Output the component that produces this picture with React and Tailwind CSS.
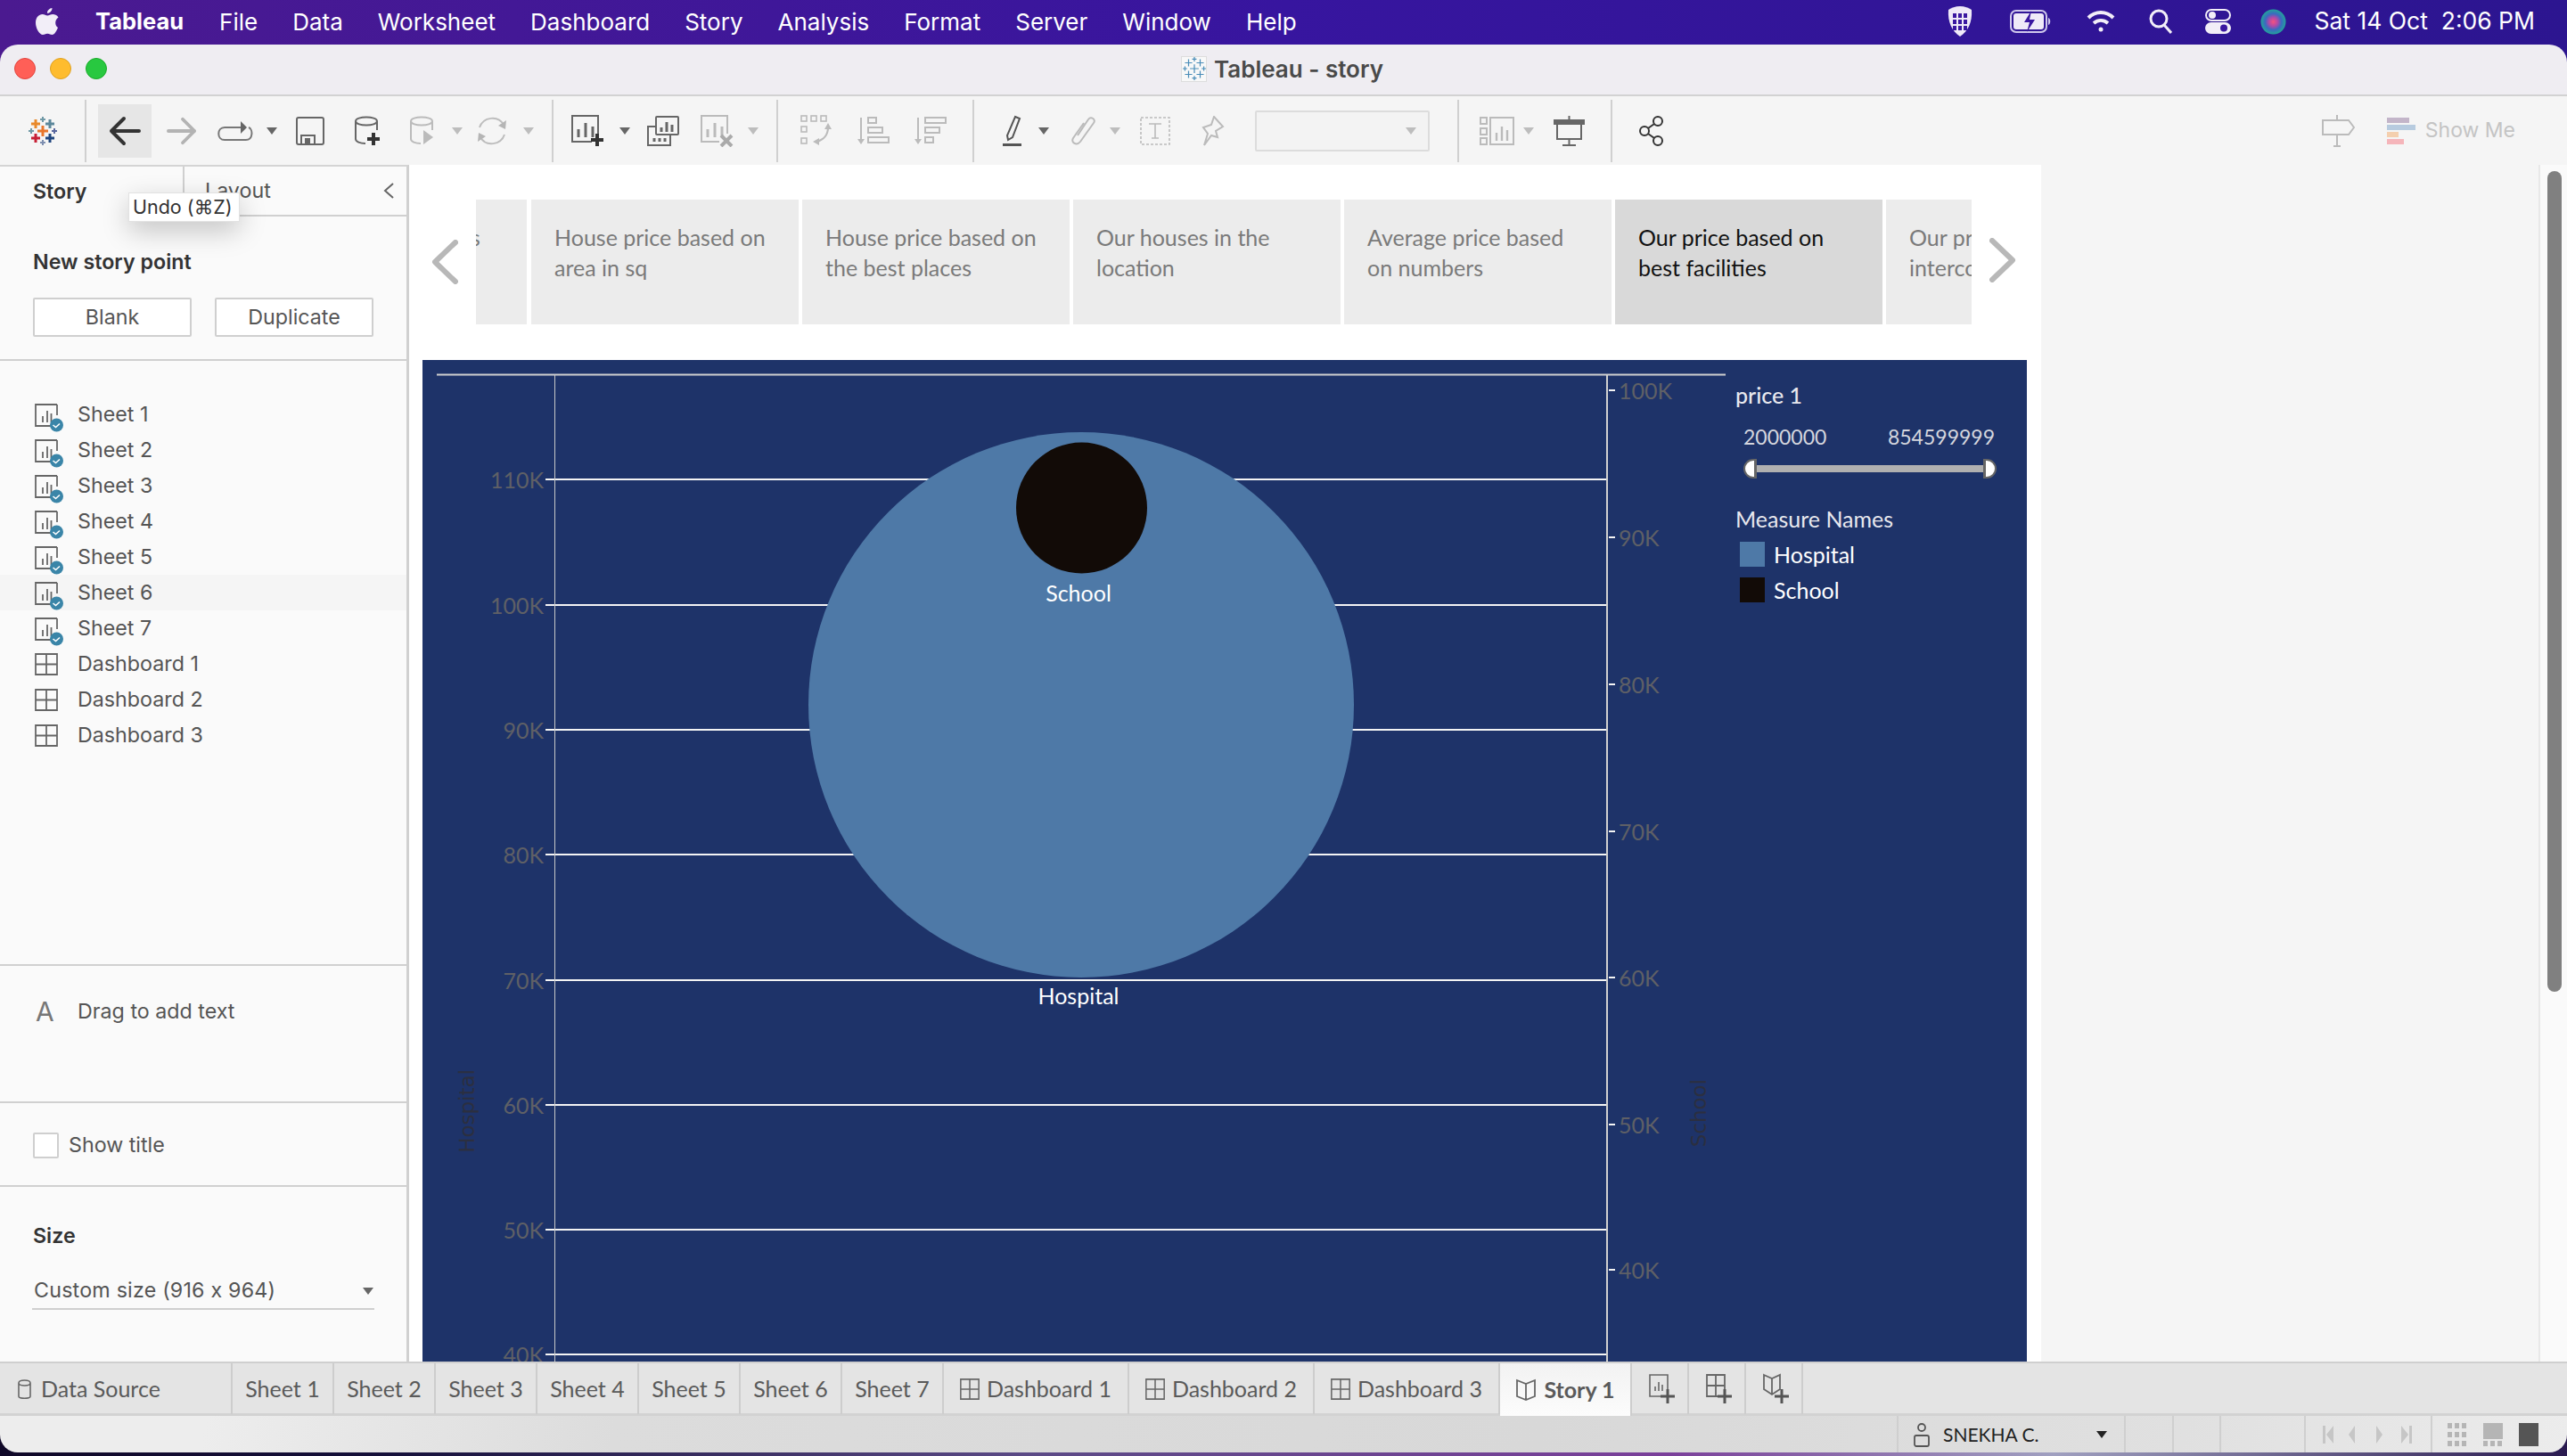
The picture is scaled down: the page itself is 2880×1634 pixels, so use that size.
import React from "react";

const menuItems = ["File", "Data", "Worksheet", "Dashboard", "Story", "Analysis", "Format", "Server", "Window", "Help"];
const storyTabs = [
  ["House price based on", "area in sq"],
  ["House price based on", "the best places"],
  ["Our houses in the", "location"],
  ["Average price based", "on numbers"],
];
const leftTicks = [["110K", 538], ["100K", 679], ["90K", 819], ["80K", 959], ["70K", 1100], ["60K", 1240], ["50K", 1380], ["40K", 1520]];
const rightTicks = [["100K", 438], ["90K", 603], ["80K", 768], ["70K", 933], ["60K", 1097], ["50K", 1262], ["40K", 1425]];
const sheets = ["Sheet 1", "Sheet 2", "Sheet 3", "Sheet 4", "Sheet 5", "Sheet 6", "Sheet 7"];
const dashboards = ["Dashboard 1", "Dashboard 2", "Dashboard 3"];

const Caret = ({ light, className = "" }) => (
  <svg width="12" height="8" viewBox="0 0 12 8" className={`shrink-0 ${className}`}>
    <path d="M0 0h12L6 8z" fill={light ? "#bdbdbd" : "#666"} />
  </svg>
);

const Divider = ({ className }) => <div className={`w-[2px] h-[70px] bg-[#d0d0d0] shrink-0 ${className}`} />;

const TableauLogo = ({ size = 32, thin }) => (
  <svg width={size} height={size} viewBox="0 0 32 32" className="shrink-0">
    {[
      [16, 16, 12, "#e8762c", 3],
      [8, 8, 10, "#e8892b", 3],
      [24, 8, 10, "#5b879b", 3],
      [8, 24, 10, "#c72035", 3],
      [24, 24, 10, "#1f457e", 3],
      [16, 3, 6, "#7099a6", 2],
      [16, 29, 6, "#7e8fb0", 2],
      [3, 16, 6, "#7099a6", 2],
      [29, 16, 6, "#59679f", 2],
    ].map(([x, y, s, c, t], i) => (
      <path key={i} d={`M${x - s / 2} ${y}h${s}M${x} ${y - s / 2}v${s}`} stroke={thin ? "#4a8db8" : c} strokeWidth={thin ? 1.5 : t} />
    ))}
  </svg>
);

const Plus = ({ x, y, s = 14, color = "#333", w = 4 }) => (
  <path d={`M${x - s / 2} ${y}h${s}M${x} ${y - s / 2}v${s}`} stroke={color} strokeWidth={w} fill="none" />
);

const Cylinder = ({ color }) => (
  <path d="M1 6c0-6 24-6 24 0s-24 6-24 0v20c0 3 5 5 11 5M25 6v10" fill="none" stroke={color} strokeWidth="2" />
);

const Bars = ({ x, y, color }) => (
  <path d={`M${x} ${y}v-9M${x + 8} ${y}v-16M${x + 16} ${y}v-12`} fill="none" stroke={color} strokeWidth="3" />
);

const SheetIcon = () => (
  <svg width="34" height="34" viewBox="0 0 34 34" className="shrink-0">
    <path d="M25 1H1v24h17" fill="none" stroke="#666" strokeWidth="1.8" />
    <path d="M25 1v12" fill="none" stroke="#666" strokeWidth="1.8" />
    <path d="M9 21v-7M14 21v-13M18.5 21v-10" stroke="#666" strokeWidth="1.8" />
    <circle cx="24.5" cy="24" r="7.5" fill="#3a85a8" />
    <path d="M20.5 24l3 2.5 4.5-4" fill="none" stroke="#fff" strokeWidth="1.6" />
  </svg>
);

const GridIcon = ({ w = 26, h = 25 }) => (
  <svg width={w} height={h} viewBox="0 0 26 25" preserveAspectRatio="none" className="shrink-0">
    <path d="M1 1h24v23H1zM13 1v23M1 12.5h24" fill="none" stroke="#666" strokeWidth="1.8" />
  </svg>
);

const BookIcon = () => (
  <svg width="24" height="26" viewBox="0 0 24 26" className="shrink-0">
    <path d="M2 2l10 4 10-4v18l-10 4-10-4zM12 6v18" fill="none" stroke="#666" strokeWidth="1.8" />
  </svg>
);

const StoryTab = ({ lines, active }) => (
  <div className={`w-[300px] h-[140px] shrink-0 pl-[26px] pt-[25px] text-[25px] leading-[34px] font-['Lato',sans-serif] whitespace-nowrap overflow-hidden ${active ? "bg-[#d9d9d9] text-[#111]" : "bg-[#ececec] text-[#7a7a7a]"}`}>
    <div>{lines[0]}</div>
    <div>{lines[1]}</div>
  </div>
);

const SheetTab = ({ label, width }) => (
  <div className={`${width} h-[57px] flex items-center justify-center border-r-2 border-[#cdcdcd] shrink-0`}>{label}</div>
);

function Chart() {
  return (
    <div className="relative ml-[15px] mt-[40px] w-[1800px] flex-1 bg-[#1e3369] overflow-hidden font-['Lato',sans-serif]">
      <svg width="1800" height="1124" viewBox="474 404 1800 1124" className="absolute left-0 top-0">
        <path d="M490 420.5H1936" stroke="#cfcfcf" strokeWidth="2" />
        {leftTicks.map(([t, y]) => (
          <path key={t} d={`M612 ${y}H1803`} stroke="#f4f4f4" strokeWidth="2" />
        ))}
        <path d="M622.5 420V1528" stroke="#c8c8c8" strokeWidth="1" />
        <path d="M1803 420V1528" stroke="#d0d0d0" strokeWidth="2" />
        {rightTicks.map(([t, y]) => (
          <path key={t} d={`M1805 ${y}h7`} stroke="#f4f4f4" strokeWidth="2" />
        ))}
        <circle cx="1213" cy="791" r="306" fill="#4e79a7" />
        <circle cx="1213.5" cy="570" r="73.5" fill="#120b07" />
      </svg>
      {leftTicks.map(([t, y]) => (
        <span key={t} className="absolute left-[34px] w-[102px] text-right text-[25px] leading-[30px] text-[#5f6066]" style={{ top: y - 404 - 15 }}>{t}</span>
      ))}
      {rightTicks.map(([t, y]) => (
        <span key={t} className="absolute left-[1342px] text-[25px] leading-[30px] text-[#5f6066]" style={{ top: y - 404 - 15 }}>{t}</span>
      ))}
      <span className="absolute left-[38px] top-[796px] [writing-mode:vertical-rl] rotate-180 text-[23px] leading-[24px] font-['DejaVu_Sans',sans-serif] text-[#2b2f40]">Hospital</span>
      <span className="absolute left-[1420px] top-[807px] [writing-mode:vertical-rl] rotate-180 text-[23px] leading-[24px] font-['DejaVu_Sans',sans-serif] text-[#2b2f40]">School</span>
      <span className="absolute left-[698px] top-[246px] w-[76px] text-center text-[25px] leading-[30px] text-white">School</span>
      <span className="absolute left-[686px] top-[698px] w-[100px] text-center text-[25px] leading-[30px] text-white">Hospital</span>

      <div className="absolute left-[1473px] top-[24px] w-[300px] text-[#e8e8ee] text-[25px] leading-[30px]">
        <div className="font-medium">price 1</div>
        <div className="flex justify-between ml-[9px] mr-[9px] mt-[17px] text-[23px] text-[#d4d6de]">
          <span>2000000</span>
          <span>854599999</span>
        </div>
        <div className="flex items-center ml-[9px] mr-[7px] mt-[10px] h-[22px]">
          <div className="w-[15px] h-[22px] bg-white border-2 border-r-[3px] border-[#666] rounded-l-full" />
          <div className="flex-1 h-[8px] bg-[#b0b0b0]" />
          <div className="w-[15px] h-[22px] bg-white border-2 border-l-[3px] border-[#666] rounded-r-full" />
        </div>
        <div className="mt-[30px]">Measure Names</div>
        <div className="flex items-center ml-[5px] mt-[11px] h-[28px] gap-[10px]">
          <div className="w-[28px] h-[28px] bg-[#4e79a7]" />
          <span className="text-white">Hospital</span>
        </div>
        <div className="flex items-center ml-[5px] mt-[12px] h-[28px] gap-[10px]">
          <div className="w-[28px] h-[28px] bg-[#120b07]" />
          <span className="text-white">School</span>
        </div>
      </div>
    </div>
  );
}

function Toolbar() {
  return (
    <div className="h-[79px] bg-[#f5f5f5] border-t-2 border-[#d2d2d2] flex items-center shrink-0">
      <div className="ml-[32px]"><TableauLogo /></div>
      <Divider className="ml-[31px]" />
      <div className="ml-[13px] w-[60px] h-[60px] bg-[#e6e6e6] flex items-center justify-center shrink-0">
        <svg width="36" height="34" viewBox="0 0 36 34"><path d="M34 17H3M17 3L3 17l14 14" fill="none" stroke="#333" strokeWidth="4" strokeLinecap="round" strokeLinejoin="round" /></svg>
      </div>
      <svg width="34" height="34" viewBox="0 0 36 34" className="ml-[17px] shrink-0"><path d="M2 17h31M19 3l14 14-14 14" fill="none" stroke="#b3b3b3" strokeWidth="4" strokeLinecap="round" strokeLinejoin="round" /></svg>
      <svg width="40" height="24" viewBox="0 0 40 24" className="ml-[23px] shrink-0">
        <path d="M27 8H8c-9 0-9 14 0 14h24c8 0 8-12 3-14" fill="none" stroke="#777" strokeWidth="2" />
        <path d="M26 1l7 7-7 7z" fill="#666" />
      </svg>
      <Caret className="ml-[15px]" />
      <svg width="32" height="32" viewBox="0 0 32 32" className="ml-[21px] shrink-0">
        <rect x="1" y="1" width="30" height="30" rx="2" fill="none" stroke="#666" strokeWidth="2" />
        <path d="M6 30V21h15v9" fill="none" stroke="#666" strokeWidth="2" />
        <rect x="10" y="24" width="6" height="6" fill="#666" />
      </svg>
      <svg width="32" height="34" viewBox="0 0 32 34" className="ml-[34px] shrink-0">
        <Cylinder color="#666" />
        <Plus x={21} y={26} />
      </svg>
      <svg width="28" height="34" viewBox="0 0 28 34" className="ml-[30px] shrink-0">
        <Cylinder color="#bbb" />
        <path d="M15 16l11 8-11 8z" fill="#bbb" />
      </svg>
      <Caret light className="ml-[19px]" />
      <svg width="34" height="34" viewBox="0 0 34 34" className="ml-[16px] shrink-0">
        <path d="M3 13C7 1 24-1 30 10M31 21C27 33 10 35 4 24" fill="none" stroke="#bdbdbd" strokeWidth="2" />
        <path d="M33 5l-1 10-8-4zM1 29l1-10 8 4z" fill="#b5b5b5" />
      </svg>
      <Caret light className="ml-[18px]" />
      <Divider className="ml-[20px]" />
      <svg width="38" height="36" viewBox="0 0 38 36" className="ml-[20px] shrink-0">
        <path d="M30 21V1H1v29h22" fill="none" stroke="#666" strokeWidth="2" />
        <Bars x={8} y={25} color="#666" />
        <Plus x={29} y={28} />
      </svg>
      <Caret className="ml-[16px]" />
      <svg width="36" height="34" viewBox="0 0 36 34" className="ml-[19px] shrink-0">
        <rect x="10" y="1" width="25" height="20" rx="1" fill="none" stroke="#666" strokeWidth="2" />
        <path d="M10 12H1v21h25v-12" fill="none" stroke="#666" strokeWidth="2" />
        <path d="M16 18v-5M22 18v-11M28 18v-8" stroke="#666" strokeWidth="3" />
        <path d="M8 29v-4M14 29v-4M20 29v-4" stroke="#666" strokeWidth="3" />
      </svg>
      <svg width="37" height="36" viewBox="0 0 37 36" className="ml-[24px] shrink-0">
        <path d="M30 21V1H1v29h20" fill="none" stroke="#bbb" strokeWidth="2" />
        <Bars x={8} y={25} color="#bbb" />
        <path d="M23 23l12 12M35 23L23 35" stroke="#aaa" strokeWidth="4" />
      </svg>
      <Caret light className="ml-[16px]" />
      <Divider className="ml-[20px]" />
      <svg width="36" height="36" viewBox="0 0 36 36" className="ml-[25px] shrink-0" fill="none" stroke="#bbb" strokeWidth="1.6">
        <rect x="1" y="1" width="6" height="6" /><rect x="12" y="1" width="6" height="6" /><rect x="23" y="1" width="6" height="6" />
        <rect x="1" y="13" width="6" height="6" /><rect x="1" y="26" width="6" height="6" />
        <path d="M31 14c0 8-5 14-13 16" strokeWidth="2.2" />
        <path d="M31 9l4 7h-8zM14 30l7-4v8z" fill="#bbb" stroke="none" />
      </svg>
      <svg width="36" height="32" viewBox="0 0 36 32" className="ml-[28px] shrink-0" fill="none" stroke="#bbb" strokeWidth="2">
        <path d="M4 1v27" /><path d="M0 25h8l-4 6z" fill="#bbb" stroke="none" />
        <rect x="12" y="1" width="9" height="6" /><rect x="12" y="12" width="16" height="6" /><rect x="12" y="23" width="23" height="6" />
      </svg>
      <svg width="36" height="32" viewBox="0 0 36 32" className="ml-[28px] shrink-0" fill="none" stroke="#bbb" strokeWidth="2">
        <path d="M4 1v27" /><path d="M0 25h8l-4 6z" fill="#bbb" stroke="none" />
        <rect x="12" y="1" width="23" height="6" /><rect x="12" y="12" width="16" height="6" /><rect x="12" y="23" width="9" height="6" />
      </svg>
      <Divider className="ml-[29px]" />
      <svg width="24" height="36" viewBox="0 0 24 36" className="ml-[31px] shrink-0">
        <path d="M15 2l5 2-8 21-5 3-1-5z" fill="none" stroke="#555" strokeWidth="2" />
        <rect x="1" y="32" width="21" height="3" fill="#555" />
      </svg>
      <Caret className="ml-[17px]" />
      <svg width="29" height="34" viewBox="0 0 29 34" className="ml-[24px] shrink-0">
        <path d="M8 22L20 4c3-4 9 0 6 4L11 29c-4 5-11 1-8-4L15 8" fill="none" stroke="#bbb" strokeWidth="2" />
      </svg>
      <Caret light className="ml-[15px]" />
      <svg width="34" height="32" viewBox="0 0 34 32" className="ml-[22px] shrink-0">
        <rect x="1" y="1" width="32" height="30" fill="none" stroke="#bbb" strokeWidth="1.6" strokeDasharray="3 2" />
        <path d="M10 8h14M17 8v16M13 24h8" fill="none" stroke="#bbb" strokeWidth="1.6" />
      </svg>
      <svg width="27" height="34" viewBox="0 0 27 34" className="ml-[34px] shrink-0">
        <path d="M15 1l10 11-8 5 2 7-7-2-8 11 4-13-5-7 9-3z" fill="none" stroke="#bbb" strokeWidth="2" />
      </svg>
      <div className="ml-[34px] w-[196px] h-[46px] border-2 border-[#dcdcdc] bg-[#f3f3f3] rounded-[2px] flex items-center justify-end pr-[13px] shrink-0">
        <Caret light />
      </div>
      <Divider className="ml-[31px]" />
      <svg width="39" height="32" viewBox="0 0 39 32" className="ml-[23px] shrink-0" fill="none" stroke="#bbb" strokeWidth="2">
        <rect x="1" y="1" width="7" height="7" /><rect x="1" y="13" width="7" height="7" /><rect x="1" y="24" width="7" height="7" />
        <rect x="12" y="1" width="26" height="30" />
        <path d="M19 27v-9M25 27v-16M31 27v-12" strokeWidth="2.4" />
      </svg>
      <Caret light className="ml-[10px]" />
      <svg width="35" height="34" viewBox="0 0 35 34" className="ml-[22px] shrink-0">
        <rect x="0" y="4" width="35" height="6" fill="#666" />
        <path d="M17.5 0v4M4 10v16h27V10M17.5 26v7M10 33h15" fill="none" stroke="#666" strokeWidth="2" />
      </svg>
      <Divider className="ml-[29px]" />
      <svg width="28" height="34" viewBox="0 0 28 34" className="ml-[30px] shrink-0" fill="none" stroke="#333" strokeWidth="2">
        <circle cx="21" cy="6" r="5" /><circle cx="6" cy="17" r="5" /><circle cx="21" cy="28" r="5" />
        <path d="M17 9l-7 5M10 20l7 5" />
      </svg>
      <div className="flex-1" />
      <svg width="37" height="36" viewBox="0 0 37 36" className="shrink-0" fill="none" stroke="#bbb" strokeWidth="2">
        <path d="M1 6h29l6 8-6 8H1zM17 0v6M17 22v13M13 35h8" />
      </svg>
      <svg width="32" height="30" viewBox="0 0 32 30" className="ml-[36px] shrink-0">
        <rect x="0" y="0" width="25" height="6" fill="#c3b5c9" />
        <rect x="0" y="8" width="32" height="6" fill="#b7cbdf" />
        <rect x="0" y="16" width="13" height="6" fill="#f4cfae" />
        <rect x="0" y="24" width="19" height="6" fill="#f5b5ba" />
      </svg>
      <span className="ml-[11px] mr-[58px] text-[23px] text-[#c4c4c4] font-['Inter',sans-serif] whitespace-nowrap">Show Me</span>
    </div>
  );
}

function Sidebar() {
  return (
    <div className="relative w-[459px] shrink-0 bg-[#fafafa] border-r-[3px] border-[#d0d0d0] border-t-2 border-t-[#d4d4d4] flex flex-col font-['Inter',sans-serif] text-[23.25px] text-[#555] [font-feature-settings:'calt'_0]">
      <div className="h-[56px] flex shrink-0">
        <div className="w-[205px] pl-[37px] flex items-center text-[#333] font-semibold">Story</div>
        <div className="flex-1 border-l-2 border-b-2 border-[#d0d0d0] pl-[23px] pr-[13px] flex items-center justify-between">
          <span>Layout</span>
          <svg width="13" height="20" viewBox="0 0 13 20"><path d="M11 2L2 10l9 8" fill="none" stroke="#666" strokeWidth="2" /></svg>
        </div>
      </div>
      <div className="h-[162px] border-b-2 border-[#d0d0d0] px-[37px] pt-[36px] shrink-0">
        <div className="text-[#333] font-semibold leading-[30px]">New story point</div>
        <div className="flex justify-between w-[382px] mt-[25px]">
          <div className="w-[178px] h-[44px] bg-white border-2 border-[#cfcfcf] rounded-[2px] flex items-center justify-center">Blank</div>
          <div className="w-[178px] h-[44px] bg-white border-2 border-[#cfcfcf] rounded-[2px] flex items-center justify-center">Duplicate</div>
        </div>
      </div>
      <div className="h-[679px] border-b-2 border-[#d0d0d0] pt-[40px] shrink-0">
        {sheets.map((s, i) => (
          <div key={s} className={`h-[40px] flex items-center pl-[39px] ${i === 5 ? "bg-[#f5f5f5]" : ""}`}>
            <div className="w-[48px] mt-[9px]"><SheetIcon /></div>
            <span>{s}</span>
          </div>
        ))}
        {dashboards.map(d => (
          <div key={d} className="h-[40px] flex items-center pl-[39px]">
            <div className="w-[48px]"><GridIcon /></div>
            <span>{d}</span>
          </div>
        ))}
      </div>
      <div className="h-[154px] border-b-2 border-[#d0d0d0] pl-[40px] pt-[33px] flex items-start shrink-0">
        <span className="w-[47px] text-[30px] leading-[36px] text-[#777]">A</span>
        <span className="leading-[36px]">Drag to add text</span>
      </div>
      <div className="h-[94px] border-b-2 border-[#d0d0d0] pl-[37px] pt-[2px] flex items-center gap-[11px] shrink-0">
        <div className="w-[29px] h-[29px] bg-white border-2 border-[#cfcfcf] rounded-[2px]" />
        <span>Show title</span>
      </div>
      <div className="flex-1 pl-[36px] pt-[40px]">
        <div className="text-[#333] font-semibold leading-[30px] pl-[1px]">Size</div>
        <div className="w-[384px] h-[41px] mt-[27px] border-b-2 border-[#cfcfcf] flex items-center justify-between pl-[2px] pr-[1px]">
          <span className="tracking-[0.2px]">Custom size (916 x 964)</span>
          <Caret />
        </div>
      </div>
      <div className="absolute left-[144px] top-[29px] w-[125px] h-[33px] bg-white border border-[#e2e2e2] shadow-[0_10px_30px_rgba(0,0,0,0.22)] flex items-center pl-[4px] text-[21.5px] text-[#333] font-['Inter','DejaVu_Sans',sans-serif] whitespace-nowrap">Undo (⌘Z)</div>
    </div>
  );
}

function Tabs() {
  return (
    <div className="h-[61px] bg-[#e4e4e4] border-t-2 border-[#cfcfcf] border-b-[3px] border-b-[#d2d2d2] flex items-start font-['Lato',sans-serif] text-[25px] text-[#5a5a5a] shrink-0 whitespace-nowrap">
      <div className="w-[261px] h-[57px] border-r-2 border-[#cdcdcd] pl-[20px] flex items-center gap-[11px] shrink-0">
        <svg width="15" height="22" viewBox="0 0 15 22"><path d="M1 4c0-4 13-4 13 0s-13 4-13 0v15c0 3 13 3 13 0V4" fill="none" stroke="#666" strokeWidth="1.6" /></svg>
        <span>Data Source</span>
      </div>
      {sheets.map(s => <SheetTab key={s} label={s} width="w-[114px]" />)}
      {dashboards.map(d => (
        <div key={d} className="w-[208px] h-[57px] border-r-2 border-[#cdcdcd] flex items-center justify-center gap-[8px] shrink-0">
          <GridIcon w={22} h={24} />
          <span>{d}</span>
        </div>
      ))}
      <div className="w-[148px] h-[59px] bg-[linear-gradient(#f2f2f2,#fcfcfc)] border-r-2 border-[#cdcdcd] flex items-center justify-center gap-[8px] font-bold shrink-0">
        <BookIcon />
        <span>Story 1</span>
      </div>
      {[0, 1, 2].map(i => (
        <div key={i} className="w-[64px] h-[57px] border-r-2 border-[#cdcdcd] flex items-center justify-center pl-[3px] shrink-0">
          <svg width="30" height="36" viewBox="0 0 30 36">
            {i === 0 && <path d="M22 18V2H2v24h12M8 20v-5M12 20v-10M16 20v-7" fill="none" stroke="#666" strokeWidth="1.6" />}
            {i === 1 && <path d="M2 2h20v24H2zM12 2v24M2 14h20" fill="none" stroke="#666" strokeWidth="1.8" />}
            {i === 2 && <path d="M2 2l9 4 9-4v16l-9 6-9-6zM11 6v18" fill="none" stroke="#666" strokeWidth="1.8" />}
            <Plus x={22} y={26} s={16} color="#555" w={3} />
          </svg>
        </div>
      ))}
    </div>
  );
}

function StatusBar() {
  return (
    <div className="flex-1 bg-[linear-gradient(100deg,#ededed_8%,#dcdcdc_24%,#d8d8d8_60%,#e0e0e0_85%,#ececec_100%)] flex justify-end">
      <div className="w-[255px] border-l-2 border-[#cfcfcf] flex items-center pl-[16px] shrink-0">
        <svg width="20" height="28" viewBox="0 0 20 28" className="shrink-0" fill="none" stroke="#555" strokeWidth="1.8">
          <circle cx="10" cy="6" r="4" /><rect x="2" y="15" width="16" height="12" rx="2" />
        </svg>
        <span className="ml-[14px] w-[172px] text-[21px] text-[#222] font-['Lato',sans-serif]">SNEKHA C.</span>
        <svg width="12" height="8" viewBox="0 0 12 8" className="shrink-0"><path d="M0 0h12L6 8z" fill="#222" /></svg>
      </div>
      <div className="w-[54px] border-l-2 border-[#cfcfcf] shrink-0" />
      <div className="w-[53px] border-l-2 border-[#cfcfcf] shrink-0" />
      <div className="w-[95px] border-l-2 border-[#cfcfcf] shrink-0" />
      <div className="w-[142px] border-l-2 border-[#cfcfcf] flex items-center pl-[19px] shrink-0">
        <svg width="100" height="24" viewBox="0 0 100 24" fill="#c6c6c6">
          <path d="M0 2h3v20H0zM12 2v20L4 12zM36 2v20l-7-10zM60 2l7 10-7 10zM88 2l8 10-8 10zM97 2h3v20h-3z" />
        </svg>
      </div>
      <div className="w-[153px] border-l-2 border-[#cfcfcf] flex items-center pl-[17px] gap-[18px] shrink-0">
        <svg width="22" height="26" viewBox="0 0 22 26" fill="#b5b5b5">
          {[0, 10, 20].map(y => [0, 8, 16].map(x => <rect key={`${x}-${y}`} x={x} y={y} width="5" height="6" />))}
        </svg>
        <svg width="22" height="26" viewBox="0 0 22 26" fill="#b5b5b5">
          <rect x="0" y="0" width="22" height="18" />
          {[0, 8, 16].map(x => <rect key={x} x={x} y="20" width="5" height="6" />)}
        </svg>
        <div className="w-[22px] h-[26px] bg-[#555]" />
      </div>
    </div>
  );
}

export default function App() {
  return (
    <div className="relative w-[2880px] h-[1634px] overflow-hidden bg-[linear-gradient(90deg,#100828_0%,#15103a_15%,#5b4a86_40%,#7a3f9a_65%,#a0a0c0_80%,#2a1a50_100%)]">
      <div className="absolute left-0 top-0 w-full h-[70px] bg-[linear-gradient(90deg,#4b1a90,#37159f_50%,#2c1590)]" />
      <div className="relative h-[50px] pb-[2px] flex items-center text-white font-['Inter',sans-serif] text-[26px] whitespace-nowrap">
        <svg width="26" height="32" viewBox="0 0 26 32" className="ml-[40px] shrink-0" fill="#f2eef8">
          <path d="M18.5 1c.2 3-2.6 6-5.5 5.8C12.700 3.900 15.600 1.200 18.500 1zM25 23c-1.500 3.500-3.700 8-6.500 8-2 0-2.800-1.300-5.300-1.300S10 31 8 31C4.500 31 0 24 0 17.500 0 11.500 3.800 8 7.500 8c2.500 0 4 1.500 5.700 1.500S16.500 8 19.500 8c1.500 0 4.500.6 6 3.500-4.500 2.800-4 9.500-.5 11.500z" />
        </svg>
        <span className="ml-[41px] font-bold text-[25.5px]">Tableau</span>
        <div className="ml-[40px] flex gap-[39px]">
          {menuItems.map(m => <span key={m}>{m}</span>)}
        </div>
        <div className="flex-1" />
        <svg width="28" height="34" viewBox="0 0 28 34" className="shrink-0">
          <path d="M14 0c5 0 10 2 13 4 1 14-4 24-13 30C5 28 0 18 1 4c3-2 8-4 13-4z" fill="#efeaf8" />
          {[8, 15, 22].map(y => [6, 12, 18].map(x => <rect key={`${x}${y}`} x={x} y={y} width="4" height="5" fill="#3a17a0" />))}
        </svg>
        <svg width="46" height="26" viewBox="0 0 46 26" className="ml-[42px] shrink-0">
          <rect x="1" y="1" width="40" height="24" rx="6" fill="none" stroke="#cfc8ec" strokeWidth="2" />
          <rect x="4" y="4" width="34" height="18" rx="3" fill="#efeaf8" />
          <path d="M24 1l-8 13h6l-3 11 9-14h-6z" fill="#3a17a0" />
          <path d="M43 9c3 1 3 7 0 8z" fill="#cfc8ec" />
        </svg>
        <svg width="32" height="26" viewBox="0 0 32 26" className="ml-[40px] shrink-0" fill="none" stroke="#f2eef8" strokeWidth="4">
          <path d="M2 9c8-8 20-8 28 0M8 15c5-4 11-4 16 0" />
          <circle cx="16" cy="22" r="2.500" fill="#f2eef8" strokeWidth="0" />
        </svg>
        <svg width="26" height="28" viewBox="0 0 26 28" className="ml-[38px] shrink-0" fill="none" stroke="#f2eef8" strokeWidth="3">
          <circle cx="11" cy="11" r="9" /><path d="M17 18l8 9" />
        </svg>
        <svg width="29" height="28" viewBox="0 0 29 28" className="ml-[37px] shrink-0">
          <rect x="1" y="1" width="27" height="12" rx="6" fill="none" stroke="#f2eef8" strokeWidth="2" />
          <circle cx="8" cy="7" r="4" fill="#f2eef8" />
          <rect x="0" y="15" width="29" height="13" rx="6.500" fill="#f2eef8" />
          <circle cx="21" cy="21.500" r="4" fill="#3a17a0" />
        </svg>
        <svg width="29" height="29" viewBox="0 0 29 29" className="ml-[33px] shrink-0">
          <defs>
            <radialGradient id="siri" cx="50%" cy="50%" r="50%">
              <stop offset="0%" stopColor="#f4527f" />
              <stop offset="35%" stopColor="#b04aa8" />
              <stop offset="65%" stopColor="#3a6ac0" />
              <stop offset="100%" stopColor="#22a39a" />
            </radialGradient>
          </defs>
          <circle cx="14.500" cy="14.500" r="14" fill="url(#siri)" />
        </svg>
        <span className="ml-[31px] mr-[36px] text-[26.5px]">Sat 14 Oct&nbsp;&nbsp;2:06 PM</span>
      </div>
      <div className="relative h-[1580px] rounded-[20px] overflow-hidden flex flex-col">
        <div className="h-[56px] bg-[#efedf2] flex items-center justify-center gap-[8px] pb-[2px] pr-[3px] relative shrink-0">
          <div className="absolute left-[16px] top-[15px] flex gap-[16px]">
            <div className="w-[24px] h-[24px] rounded-full bg-[#ff5f57] border border-[#e0443e]" />
            <div className="w-[24px] h-[24px] rounded-full bg-[#febc2e] border border-[#dea123]" />
            <div className="w-[24px] h-[24px] rounded-full bg-[#28c840] border border-[#1aab29]" />
          </div>
          <div className="w-[29px] h-[29px] bg-[#f8f8f8] border border-[#ddd] flex items-center justify-center">
            <TableauLogo size={26} thin />
          </div>
          <span className="text-[26px] font-semibold text-[#4a4a4a] font-['Inter',sans-serif]">Tableau - story</span>
        </div>
        <Toolbar />
        <div className="h-[1343px] flex shrink-0">
          <Sidebar />
          <div className="w-[1831px] shrink-0 bg-white flex flex-col overflow-hidden">
            <div className="mt-[39px] h-[140px] flex items-start shrink-0">
              <svg width="30" height="50" viewBox="0 0 30 50" className="ml-[25px] mt-[45px] shrink-0">
                <path d="M27 3L4 25l23 22" fill="none" stroke="#b8b8b8" strokeWidth="6" strokeLinecap="round" strokeLinejoin="round" />
              </svg>
              <div className="ml-[20px] w-[1678px] h-[140px] flex overflow-hidden font-['Lato',sans-serif] shrink-0">
                <div className="w-[57px] h-[140px] bg-[#ececec] overflow-hidden pt-[25px] text-[25px] leading-[34px] text-[#7a7a7a] shrink-0">
                  <div className="-ml-[6px]">s</div>
                </div>
                <div className="flex gap-[4px] ml-[5px]">
                  {storyTabs.map(t => <StoryTab key={t[0] + t[1]} lines={t} />)}
                  <StoryTab lines={["Our price based on", "best facilities"]} active />
                  <StoryTab lines={["Our price based on", "intercourse"]} />
                </div>
              </div>
              <svg width="30" height="50" viewBox="0 0 30 50" className="ml-[20px] mt-[43px] shrink-0">
                <path d="M3 3l23 22L3 47" fill="none" stroke="#b8b8b8" strokeWidth="6" strokeLinecap="round" strokeLinejoin="round" />
              </svg>
            </div>
            <Chart />
          </div>
          <div className="flex-1 bg-[#f5f5f5] flex justify-end">
            <div className="w-[32px] bg-[#fafafa] border-l-2 border-[#e8e8e8] pl-[8px] pt-[7px]">
              <div className="w-[16px] h-[921px] rounded-full bg-[#808080]" />
            </div>
          </div>
        </div>
        <Tabs />
        <StatusBar />
      </div>
    </div>
  );
}
